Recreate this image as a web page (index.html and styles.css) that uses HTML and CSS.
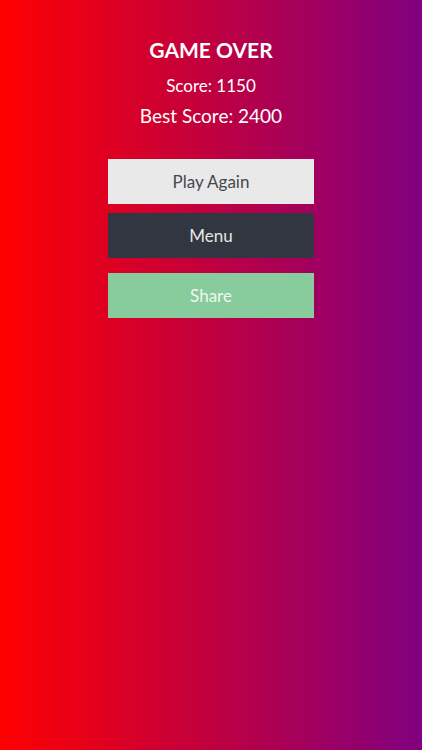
FILE: index.html
```html
<!DOCTYPE html>
<html lang="en">
  <head>
    <meta charset="UTF-8" />
    <meta name="viewport" content="width=device-width, initial-scale=1.0" />
    <title>Game Over</title>
    <link rel="stylesheet" href="styles.css">
  </head>
  <body>
    <div class="game-over">
      <div class="title">GAME OVER</div>
      <div class="score">Score: 1150</div>
      <div class="best">Best Score: 2400</div>

      <div class="buttons">
        <button class="btn btn-light">Play Again</button>
        <button class="btn btn-dark">Menu</button>
        <button class="btn btn-green">Share</button>
      </div>
    </div>
  </body>
</html>
```

FILE: styles.css
```css
/* Base styles for the body */
body {
  font-family: Lato, "Noto Sans", sans-serif;
  margin: 0;
  padding: 0;
  background-image: linear-gradient(to right, #ff0000, #800080);
  height: 100vh;
  color: #fff;
}

/* Centered column */
.game-over {
  display: flex;
  flex-direction: column;
  align-items: center;
  padding-top: 37px;
}

/* Heading */
.title {
  font-size: 21px;
  font-weight: bold;
  line-height: 26px;
}

.score {
  font-size: 17px;
  line-height: 20px;
  margin-top: 13px;
}

.best {
  font-size: 19px;
  line-height: 22px;
  margin-top: 9px;
}

/* Button stack */
.buttons {
  display: flex;
  flex-direction: column;
  margin-top: 32px;
  width: 206px;
}

.btn {
  font-family: inherit;
  font-size: 17px;
  height: 45px;
  border: none;
  padding: 0;
}

.btn-light {
  background-color: #e9e9e9;
  color: #45474f;
}

.btn-dark {
  background-color: #323640;
  color: #e6e6e6;
  margin-top: 9px;
}

.btn-green {
  background-color: #88cb9c;
  color: #eef8ef;
  margin-top: 15px;
}
```
